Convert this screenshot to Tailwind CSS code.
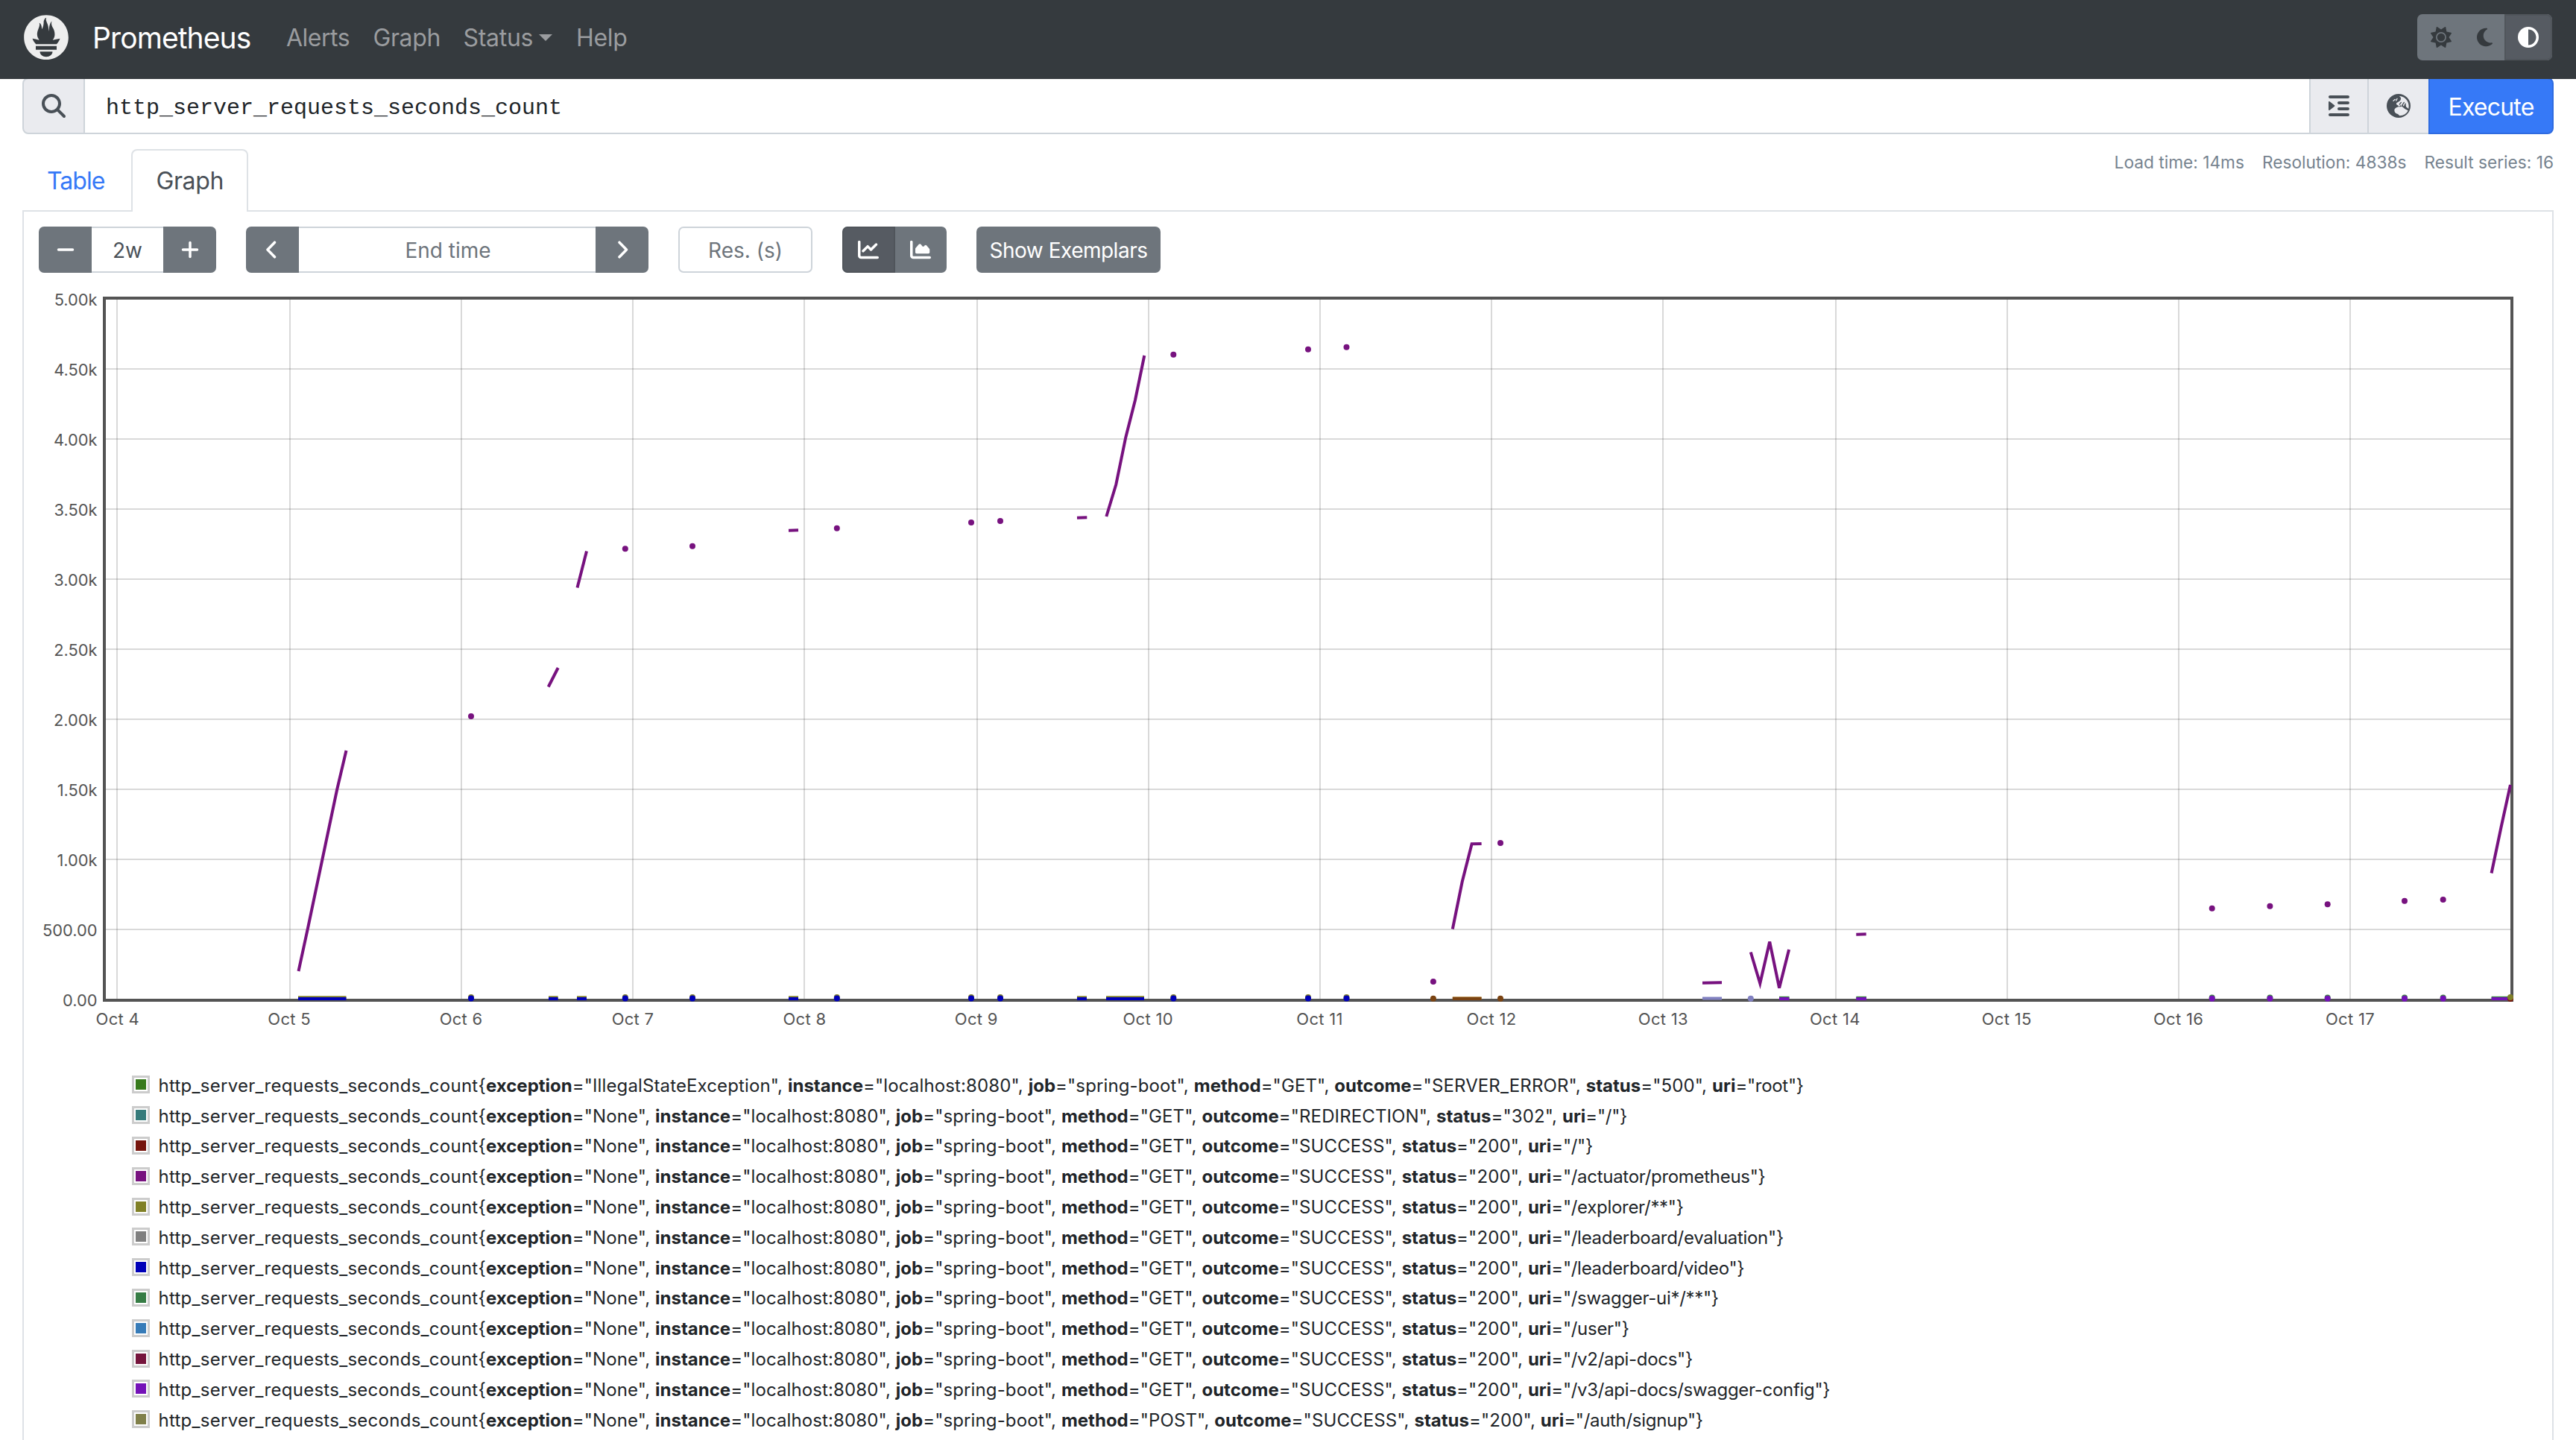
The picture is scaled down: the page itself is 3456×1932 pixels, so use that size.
<!DOCTYPE html>
<html lang="en">
<head>
<meta charset="utf-8">
<title>Prometheus Time Series Collection and Processing Server</title>
<script src="https://cdn.jsdelivr.net/npm/@tailwindcss/browser@4"></script>
</head>
<body class="w-[3456px] h-[1932px] overflow-hidden bg-white font-['Inter',sans-serif] text-[#212529]">

<header class="relative z-10 flex items-center h-[106px] pb-[6px] pl-8 pr-8 bg-[#353a3e]">
  <svg class="w-[60px] h-[60px] shrink-0" viewBox="0 0 113.333 114"><path fill="#eeeeee" d="M56.667.667C25.372.667 0 26.036 0 57.332c0 31.295 25.372 56.666 56.667 56.666s56.666-25.371 56.666-56.666c0-31.296-25.372-56.665-56.666-56.665zm0 106.055c-8.904 0-16.123-5.948-16.123-13.283H72.79c0 7.334-7.219 13.283-16.123 13.283zM83.297 89.04H30.034V79.382h53.264V89.04zm-.191-14.629H30.186c-.176-.203-.356-.403-.526-.609-5.452-6.62-6.736-10.076-7.983-13.598-.021-.116 6.611 1.355 11.314 2.413 0 0 2.42.56 5.958 1.205-3.397-3.982-5.414-9.044-5.414-14.218 0-11.359 8.712-21.285 5.569-29.308 3.059.249 6.331 6.456 6.552 16.161 3.252-4.494 4.613-12.701 4.613-17.733 0-5.21 3.433-11.262 6.867-11.469-3.061 5.045.793 9.37 4.219 20.099 1.285 4.03 1.121 10.812 2.113 15.113C63.797 33.534 65.333 20.5 71 16c-2.5 5.667.37 12.758 2.333 16.167 3.167 5.5 5.087 9.667 5.087 17.548 0 5.284-1.951 10.259-5.242 14.148 3.742-.702 6.326-1.335 6.326-1.335l12.152-2.371c.001-.001-1.765 7.261-8.55 14.402z"/></svg>
  <span class="ml-8 w-[260px] text-[39px] tracking-[-0.9px] leading-none text-white">Prometheus</span>
  <nav class="flex items-center pt-px text-[32px] leading-none text-[#9a9c9f]">
    <a class="w-[116.5px] tracking-[-0.5px]">Alerts</a>
    <a class="w-[121px] tracking-[-0.4px]">Graph</a>
    <a class="w-[151.5px] flex items-center tracking-[-0.3px]">Status<svg class="w-[18px] h-[9px] ml-2" viewBox="0 0 18 9"><path fill="#9a9c9f" d="M0 0h18l-9 9z"/></svg></a>
    <a class="tracking-[-0.3px]">Help</a>
  </nav>
  <div class="ml-auto flex h-[62px] w-[181px] rounded-[7px] overflow-hidden bg-[#6e757c]">
    <div class="w-[64px] flex items-center justify-center"><svg class="w-7 h-7" viewBox="0 0 512 512"><path fill="#353a3e" d="M361.5 1.2c5 2.1 8.6 6.6 9.6 11.9L391 121l107.9 19.8c5.3 1 9.8 4.6 11.9 9.6s1.5 10.7-1.6 15.2L446.9 256l62.3 90.3c3.1 4.5 3.7 10.2 1.6 15.2s-6.6 8.6-11.9 9.6L391 391 371.1 498.9c-1 5.3-4.6 9.8-9.6 11.9s-10.7 1.5-15.2-1.6L256 446.9l-90.3 62.3c-4.5 3.1-10.2 3.7-15.2 1.6s-8.6-6.6-9.6-11.9L121 391 13.1 371.1c-5.3-1-9.8-4.6-11.9-9.6s-1.5-10.7 1.6-15.2L65.1 256 2.8 165.7c-3.1-4.5-3.7-10.2-1.6-15.2s6.6-8.6 11.9-9.6L121 121 140.9 13.1c1-5.3 4.6-9.8 9.6-11.9s10.7-1.5 15.2 1.6L256 65.1 346.3 2.8c4.5-3.1 10.2-3.7 15.2-1.6zM160 256a96 96 0 1 1 192 0 96 96 0 1 1 -192 0zm224 0a128 128 0 1 0 -256 0 128 128 0 1 0 256 0z"/></svg></div>
    <div class="w-[53px] flex items-center justify-center"><svg class="w-[21px] h-7" viewBox="0 0 384 512"><path fill="#353a3e" d="M223.5 32C100 32 0 132.3 0 256S100 480 223.5 480c60.6 0 115.5-24.2 155.8-63.4c5-4.9 6.3-12.5 3.1-18.7s-10.1-9.7-17-8.5c-9.8 1.7-19.8 2.6-30.1 2.6c-96.9 0-175.5-78.8-175.5-176c0-65.8 36-123.1 89.3-153.3c6.1-3.5 9.2-10.5 7.7-17.3s-7.3-11.9-14.3-12.5c-6.3-.5-12.6-.8-19-.8z"/></svg></div>
    <div class="w-[64px] flex items-center justify-center rounded-r-[7px] border-2 border-[#50555b] bg-[#565b62]"><svg class="w-7 h-7" viewBox="0 0 512 512"><path fill="#fff" d="M448 256c0-106-86-192-192-192V448c106 0 192-86 192-192zM0 256a256 256 0 1 1 512 0A256 256 0 1 1 0 256z"/></svg></div>
  </div>
</header>

<main class="px-[30px]">
  <!-- expression input -->
  <div class="-mt-0.5 flex h-[76px]">
    <div class="w-[84px] flex items-center justify-center rounded-l-lg border-2 border-[#ced4da] bg-[#eaebef]"><svg class="w-8 h-8" viewBox="0 0 512 512"><path fill="#495057" d="M416 208c0 45.9-14.9 88.3-40 122.7L502.6 457.4c12.5 12.5 12.5 32.8 0 45.3s-32.8 12.5-45.3 0L330.7 376c-34.4 25.2-76.8 40-122.7 40C93.1 416 0 322.9 0 208S93.1 0 208 0S416 93.1 416 208zM208 352a144 144 0 1 0 0-288 144 144 0 1 0 0 288z"/></svg></div>
    <div class="flex-1 flex items-center border-y-2 border-[#ced4da] pl-7 pt-[6px] font-['Liberation_Mono',monospace] text-[30px] leading-none text-[#212529]">http_server_requests_seconds_count</div>
    <div class="w-[78px] flex items-center justify-center border-l-2 border-y-2 border-[#ced4da] bg-[#eaebef]"><svg class="w-7 h-8" viewBox="0 0 448 512"><path fill="#495057" d="M0 64C0 46.3 14.3 32 32 32H416c17.7 0 32 14.3 32 32s-14.3 32-32 32H32C14.3 96 0 81.7 0 64zM192 192c0-17.7 14.3-32 32-32H416c17.7 0 32 14.3 32 32s-14.3 32-32 32H224c-17.7 0-32-14.3-32-32zm32 96H416c17.7 0 32 14.3 32 32s-14.3 32-32 32H224c-17.7 0-32-14.3-32-32s14.3-32 32-32zM0 448c0-17.7 14.3-32 32-32H416c17.7 0 32 14.3 32 32s-14.3 32-32 32H32c-17.7 0-32-14.3-32-32zM127.8 268.6L25.8 347.9C15.3 356.1 0 348.6 0 335.3V176.7c0-13.3 15.3-20.8 25.8-12.6l101.9 79.3c8.2 6.4 8.2 18.8 0 25.2z"/></svg></div>
    <div class="w-[82px] flex items-center justify-center border-l-2 border-y-2 border-[#ced4da] bg-[#eaebef]"><svg class="w-8 h-8" viewBox="0 0 96 96"><circle cx="48" cy="48" r="48" fill="#495057"/><path fill="#eaebef" d="M50 8C72 9 89 27 89 49L88 60 78 52C76 44 79 38 75 37L71 44 69 50 64 44 60 50 56 45 50 51 45 46C40 44 37 41 40 36 46 32 50 30 55 26 60 18 57 13 50 8ZM54 52C42 50 31 58 31 66 31 75 38 80 45 81L52 88C68 88 82 78 86 67L74 61 62 51Z"/><path stroke="#eaebef" stroke-width="4" stroke-linecap="round" fill="none" d="M27 28l7-6M38 27l4-8"/><path stroke="#495057" stroke-width="4" stroke-linecap="round" fill="none" d="M58 34l-6 8M70 34l-8 12"/></svg></div>
    <button class="w-[168px] pt-[3px] rounded-r-lg border-2 border-[#2f6be0] bg-[#3679f7] text-[32px] tracking-[-0.8px] leading-none text-white">Execute</button>
  </div>

  <!-- tabs and query statistics -->
  <div class="relative flex h-[84px] mt-5 -mb-0.5 text-[32px] leading-none">
    <div class="w-[146px] pl-[33px] pt-[27px] border-b-2 border-[#dee2e6] text-[#3679f7] tracking-[-1px]">Table</div>
    <div class="w-[157px] pl-[31.5px] pt-[25px] rounded-t-lg border-2 border-b-0 border-[#dee2e6] bg-white text-[#495057] tracking-[-0.4px]">Graph</div>
    <div class="flex-1 flex justify-end gap-[24px] pt-[6px] border-b-2 border-[#dee2e6] text-[22.7px] leading-[23px] text-[#76838f]">
      <span>Load time: 14ms</span><span>Resolution: 4838s</span><span>Result series: 16</span>
    </div>
  </div>

  <!-- graph panel -->
  <section class="h-[1700px] border-x-2 border-[#dee2e6] pt-[22px]">
    <div class="flex h-[62px] pl-5 text-[28px] leading-none text-white">
      <div class="flex w-[238px] rounded-[7px] overflow-hidden bg-[#6e757c]">
        <div class="w-[71px] flex items-center justify-center"><svg class="w-6 h-6" viewBox="0 0 24 24"><path stroke="#fff" stroke-width="3.5" stroke-linecap="round" d="M2.5 12h19"/></svg></div>
        <div class="w-[96px] flex items-center justify-center pt-0.5 border-y-2 border-[#ced4da] bg-white text-[#495057]">2w</div>
        <div class="w-[71px] flex items-center justify-center"><svg class="w-6 h-6" viewBox="0 0 24 24"><path stroke="#fff" stroke-width="3.5" stroke-linecap="round" d="M2.5 12h19M12 2.5v19"/></svg></div>
      </div>
      <div class="ml-10 flex w-[540px] rounded-[7px] overflow-hidden bg-[#6e757c]">
        <div class="w-[71px] flex items-center justify-center"><svg class="w-[15px] h-6 -ml-1" viewBox="0 0 15 24"><path stroke="#fff" stroke-width="3.5" stroke-linecap="round" stroke-linejoin="round" fill="none" d="M12.5 2.2L3 12l9.500 9.800"/></svg></div>
        <div class="w-[398px] flex items-center justify-center pt-0.5 pl-0.5 border-y-2 border-[#ced4da] bg-white text-[#6e757c]">End time</div>
        <div class="w-[71px] flex items-center justify-center"><svg class="w-[15px] h-6 ml-0.5" viewBox="0 0 15 24"><path stroke="#fff" stroke-width="3.5" stroke-linecap="round" stroke-linejoin="round" fill="none" d="M3 2.200L12.500 12 3 21.800"/></svg></div>
      </div>
      <div class="ml-10 w-[180px] flex items-center justify-center pt-0.5 rounded-[7px] border-2 border-[#ced4da] text-[#6e757c]">Res. (s)</div>
      <div class="ml-10 flex w-[140px] rounded-[7px] overflow-hidden bg-[#6e757c]">
        <div class="w-[71px] flex items-center justify-center pr-px rounded-l-[7px] border-2 border-[#50555b] bg-[#565b62]"><svg class="w-7 h-7" viewBox="0 0 512 512"><path fill="#fff" d="M64 64c0-17.700-14.300-32-32-32S0 46.300 0 64V400c0 44.200 35.800 80 80 80H480c17.700 0 32-14.300 32-32s-14.300-32-32-32H80c-8.800 0-16-7.200-16-16V64zm406.600 86.600c12.500-12.500 12.500-32.800 0-45.300s-32.800-12.500-45.300 0L320 210.700l-57.400-57.400c-12.500-12.500-32.800-12.500-45.300 0l-112 112c-12.500 12.500-12.500 32.800 0 45.300s32.800 12.500 45.300 0L240 221.300l57.400 57.400c12.500 12.500 32.800 12.500 45.300 0l128-128z"/></svg></div>
        <div class="w-[69px] flex items-center justify-center pr-0.5"><svg class="w-7 h-7" viewBox="0 0 512 512"><path fill="#fff" d="M64 64c0-17.700-14.300-32-32-32S0 46.300 0 64V400c0 44.200 35.800 80 80 80H480c17.700 0 32-14.300 32-32s-14.300-32-32-32H80c-8.800 0-16-7.200-16-16V64zm96 288H448c17.700 0 32-14.300 32-32V251.800c0-7.600-2.700-15-7.700-20.800l-65.800-76.800c-12.100-14.200-33.700-15-46.900-1.800l-21 21c-10 10-26.400 9.200-35.400-1.600l-39.200-47c-12.600-15.100-35.700-15.400-48.700-.6L135.900 215c-5.100 5.800-7.900 13.300-7.900 21.100v84c0 17.700 14.300 32 32 32z"/></svg></div>
      </div>
      <button class="ml-10 w-[247px] pt-px rounded-[7px] bg-[#6e757c] tracking-[-0.5px]">Show Exemplars</button>
    </div>

    <svg id="chart" class="block w-[3392px] h-[1068px]" viewBox="32 366 3392 1068"></svg>

    <div id="legend" class="pl-[145px] pt-px text-2xl leading-none whitespace-pre"></div>
  </section>
</main>

<script>
// Chart: coordinates are in page pixels; 500 units span 94px
const xs = [157,389,619,849,1079,1311,1541,1771,2001,2231,2463,2693,2923,3153];
const ys = ['0.00','500.00','1.00k','1.50k','2.00k','2.50k','3.00k','3.50k','4.00k','4.50k','5.00k'];
let g = '';
xs.forEach((x, i) => {
  g += `<rect x="${x-1}" y="402" width="2" height="938" fill="#545454" fill-opacity=".22"/>`;
  g += `<text x="${157.8 + 230.4*i}" y="1375" text-anchor="middle" letter-spacing=".3">Oct ${i+4}</text>`;
});
ys.forEach((t, i) => {
  const y = 1341 - 94*i;
  if (i && i < 10) g += `<rect x="142" y="${y-1}" width="3226" height="2" fill="#545454" fill-opacity=".22"/>`;
  g += `<text x="130.500" y="${y+9}" text-anchor="end" font-size="21.800">${t}</text>`;
});
g += '<rect x="140" y="400" width="3230" height="942" fill="none" stroke="#545454" stroke-width="4"/>';

const dots = (list, c) => list.forEach(([x, y]) => g += `<circle cx="${x}" cy="${y}" r="4" fill="${c}"/>`);
const lines = (list, c) => list.forEach(p => g += `<polyline points="${p}" fill="none" stroke="${c}" stroke-width="4"/>`);

const purple = '#77127f';
lines(['400.500,1303 413.500,1243 452,1060 464.500,1007','735.700,921.500 748.700,896','774.500,788.500 787,739.500','1058,711.700 1071,711.300',
  '1445,694.700 1458.300,694.300','1484.300,693 1497.300,650 1510.300,586.700 1523,536.700 1535.300,477','1948.800,1246.500 1961.700,1183 1974.600,1132.300 1987.600,1132',
  '2284,1318.700 2310,1318.300','2348.800,1277.500 2361.300,1319.500 2374.200,1263.500 2387.100,1325.500 2400.100,1274','2490.300,1253.700 2503.700,1253.300','3342.600,1171.500 3355.500,1110 3368,1053'], purple);
dots([[632,961],[838.8,736.3],[929,732.7],[1122.8,708.7],[1303,701],[1342,699],[1574.3,475.7],[1755,468.7],[1806.5,465.7],[1922.9,1317],[2013,1131],
  [2967.7,1218.7],[3045.4,1215.7],[3122.7,1213.3],[3226,1208.7],[3277.7,1207]], purple);

const flat = (list, y) => list.map(([a, b]) => `${a},${y} ${b},${y}`);
const blueRuns = [[400,464.5],[736,748.6],[774,787],[1058,1071],[1445,1458],[1484,1535]];
const blueDots = [632,838.8,929,1122.8,1303,1342,1574.3,1755,1806.5];
lines(flat(blueRuns, 1338.3), '#80802a');
dots(blueDots.map(x => [x, 1338]), '#80802a');
lines(flat(blueRuns, 1340), '#0000b8');
dots(blueDots.map(x => [x, 1339.5]), '#0000b8');

lines(flat([[1948.8,1987.6]], 1339), '#c09a60');
lines(flat([[1948.8,1987.6]], 1340), '#7a4312');
dots([[1922.9,1339.7],[2013,1339.7]], '#7a4312');

lines(flat([[2284,2310]], 1339.5), '#8080c0');
dots([[2348.8,1339.7]], '#8080c0');

const violetRuns = [[2387,2400.5],[2490.3,2504],[3342.6,3368]];
const violetDots = [2967.7,3045.4,3122.7,3226,3277.7];
lines(flat(violetRuns, 1338.8), '#3a8040');
dots(violetDots.map(x => [x, 1338.5]), '#3a8040');
lines(flat(violetRuns, 1340), '#7412b8');
dots(violetDots.map(x => [x, 1339.8]), '#7412b8');
dots([[3368,1340]], '#7a140c');
dots([[3368,1338]], '#80802a');

const chart = document.getElementById('chart');
chart.innerHTML = `<g font-family="Inter, sans-serif" font-size="22" fill="#545454">${g}</g>`;

// Legend
const rows = [
  ['#377a1c','IllegalStateException','GET','SERVER_ERROR','500','root'],
  ['#367b7b','None','GET','REDIRECTION','302','/'],
  ['#75140c','None','GET','SUCCESS','200','/'],
  ['#77127f','None','GET','SUCCESS','200','/actuator/prometheus'],
  ['#808026','None','GET','SUCCESS','200','/explorer/**'],
  ['#808080','None','GET','SUCCESS','200','/leaderboard/evaluation'],
  ['#0000b8','None','GET','SUCCESS','200','/leaderboard/video'],
  ['#367c45','None','GET','SUCCESS','200','/swagger-ui*/**'],
  ['#367bb8','None','GET','SUCCESS','200','/user'],
  ['#75143c','None','GET','SUCCESS','200','/v2/api-docs'],
  ['#7412b8','None','GET','SUCCESS','200','/v3/api-docs/swagger-config'],
  ['#80804a','None','POST','SUCCESS','200','/auth/signup'],
];
document.getElementById('legend').innerHTML = rows.map(([c, ex, m, o, s, u]) => {
  const labels = [['exception',ex],['instance','localhost:8080'],['job','spring-boot'],['method',m],['outcome',o],['status',s]]
    .map(([k, v]) => `<b class="font-bold tracking-normal">${k}</b>="${v}", `).join('');
  return `<div class="flex items-center h-[40.8px]"><span class="w-6 h-6 mr-[11.5px] border-[3px] border-[#cccccc] bg-white p-[2px] flex"><span class="flex-1" style="background:${c}"></span></span><span class="pt-[3px] tracking-[0.27px]">http_server_requests_seconds_count{<span class="tracking-[0.12px]">${labels}</span><b class="font-bold tracking-normal">uri</b><span class="tracking-[-0.3px]">="${u}"}</span></span></div>`;
}).join('');
</script>
</body>
</html>
